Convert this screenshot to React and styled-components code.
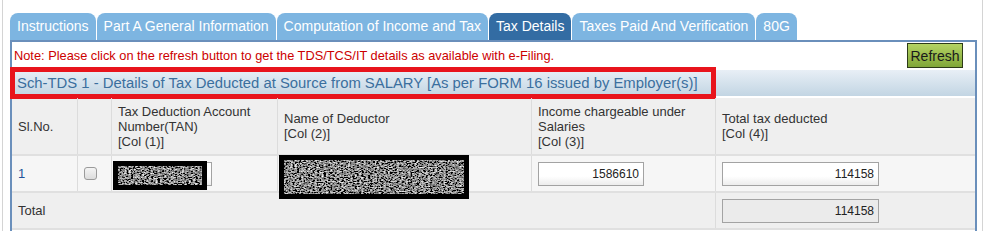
import React from 'react';
import styled, { createGlobalStyle } from 'styled-components';

const GlobalStyle = createGlobalStyle`
  html, body { margin: 0; padding: 0; background: #fff; }
  body { font-family: "Liberation Sans", Arial, sans-serif; }
`;

const Frame = styled.div`
  box-sizing: border-box;
  margin-left: 2px;
  width: 981px;
  height: 231px;
  border-left: 1px solid #d4d4d4;
  border-right: 1px solid #d4d4d4;
  padding: 13px 5px 0 7px;
  overflow: hidden;
`;

const TabBar = styled.div`
  display: flex;
  gap: 1px;
  height: 27px;
`;

const Tab = styled.div`
  padding: 0 7px;
  height: 27px;
  line-height: 27px;
  font-size: 14px;
  color: #fff;
  background: ${p => (p.$active ? '#336ca3' : '#7db5e1')};
  border-radius: 8px 8px 0 0;
  white-space: nowrap;
`;

const Panel = styled.div`
  box-sizing: border-box;
  width: 967px;
  height: 191px;
  border: 2px solid #6a8fbb;
  border-bottom: none;
`;

const NoteRow = styled.div`
  display: flex;
  justify-content: space-between;
  align-items: flex-start;
  height: 28px;
  padding: 1px 12px 0 2px;
  box-sizing: border-box;
`;

const Note = styled.span`
  font-size: 12.8px;
  line-height: 25px;
  color: #cc0000;
`;

const RefreshButton = styled.button`
  box-sizing: border-box;
  width: 56px;
  height: 25px;
  padding: 0;
  border: 1px solid #2c3a18;
  background: linear-gradient(#b4d363, #80a638);
  font-family: "Liberation Sans", Arial, sans-serif;
  font-size: 14px;
  color: #1a1a1a;
`;

const HeadingWrap = styled.div`
  position: relative;
`;

const Heading = styled.div`
  height: 26px;
  line-height: 26px;
  padding-left: 5px;
  background: linear-gradient(#e8eff6, #c2d5e3);
  color: #3b6f9e;
  font-size: 14.85px;
  white-space: nowrap;
`;

const Annotation = styled.div`
  position: absolute;
  left: -2px;
  top: -3px;
  width: 706px;
  height: 32px;
  box-sizing: border-box;
  border: 5px solid #e8141c;
  pointer-events: none;
`;

const Table = styled.div`
  margin-top: 2px;
`;

const Row = styled.div`
  display: grid;
  grid-template-columns: 66px 34px 166px 254px 184px 259px;
  height: ${p => p.$h}px;
  background: ${p => p.$bg};
  border-bottom: 2px solid #e0e0e0;
`;

const Cell = styled.div`
  position: relative;
  display: flex;
  align-items: center;
  padding-left: ${p => (p.$pl ?? 6)}px;
  border-right: ${p => (p.$last ? 'none' : '1px solid #dcdcdc')};
  grid-column: ${p => p.$span || 'auto'};
  font-size: 13px;
  line-height: 15px;
  color: ${p => p.$color || '#333'};
`;

const Check = styled.input`
  appearance: none;
  margin: 0;
  width: 13px;
  height: 13px;
  box-sizing: border-box;
  border: 1px solid #9a9a9a;
  border-radius: 3px;
  background: linear-gradient(#f4f4f4, #dcdcdc);
`;

const Field = styled.input`
  box-sizing: border-box;
  width: ${p => p.$w}px;
  height: 24px;
  border: 1px solid #a3a3a3;
  background: ${p => (p.$disabled ? '#ebebeb' : 'linear-gradient(#fff 60%, #ededed)')};
  text-align: right;
  padding: 0 4px;
  font-family: "Liberation Sans", Arial, sans-serif;
  font-size: 12px;
  color: #222;
`;

const Redaction = styled.div`
  position: absolute;
  z-index: 2;
  left: ${p => p.$l}px;
  top: ${p => p.$t}px;
  width: ${p => p.$w}px;
  height: ${p => p.$h}px;
  box-sizing: border-box;
  background: #000;
  padding: 5px;
  svg { display: block; width: 100%; height: 100%; }
`;

function Noise({ id }) {
  return (
    <svg>
      <filter id={id}>
        <feTurbulence type="fractalNoise" baseFrequency="0.45 0.8" numOctaves="3" seed="7" />
        <feColorMatrix type="saturate" values="0" />
        <feComponentTransfer>
          <feFuncR type="linear" slope="2.6" intercept="-1.05" />
          <feFuncG type="linear" slope="2.6" intercept="-1.05" />
          <feFuncB type="linear" slope="2.6" intercept="-1.05" />
          <feFuncA type="linear" slope="0" intercept="1" />
        </feComponentTransfer>
      </filter>
      <rect width="100%" height="100%" filter={`url(#${id})`} />
    </svg>
  );
}

const tabs = [
  'Instructions',
  'Part A General Information',
  'Computation of Income and Tax',
  'Tax Details',
  'Taxes Paid And Verification',
  '80G',
];

export default function App() {
  return (
    <>
      <GlobalStyle />
      <Frame>
        <TabBar>
          {tabs.map(t => (
            <Tab key={t} $active={t === 'Tax Details'}>{t}</Tab>
          ))}
        </TabBar>
        <Panel>
          <NoteRow>
            <Note>Note: Please click on the refresh button to get the TDS/TCS/IT details as available with e-Filing.</Note>
            <RefreshButton>Refresh</RefreshButton>
          </NoteRow>
          <HeadingWrap>
            <Heading>Sch-TDS 1 - Details of Tax Deducted at Source from SALARY [As per FORM 16 issued by Employer(s)]</Heading>
            <Annotation />
          </HeadingWrap>
          <Table>
            <Row $h={56} $bg="#efefef">
              <Cell>Sl.No.</Cell>
              <Cell />
              <Cell>Tax Deduction Account<br />Number(TAN)<br />[Col (1)]</Cell>
              <Cell>Name of Deductor<br />[Col (2)]</Cell>
              <Cell>Income chargeable under<br />Salaries<br />[Col (3)]</Cell>
              <Cell $last>Total tax deducted<br />[Col (4)]</Cell>
            </Row>
            <Row $h={35} $bg="#f6f6f6">
              <Cell $color="#22529a">1</Cell>
              <Cell><Check type="checkbox" /></Cell>
              <Cell $pl={1}>
                <Field $w={99} defaultValue="" />
                <Redaction $l={1} $t={5} $w={94} $h={29}><Noise id="n1" /></Redaction>
              </Cell>
              <Cell>
                <Redaction $l={1} $t={-1} $w={190} $h={44}><Noise id="n2" /></Redaction>
              </Cell>
              <Cell><Field $w={106} defaultValue="1586610" /></Cell>
              <Cell $last><Field $w={157} defaultValue="114158" /></Cell>
            </Row>
            <Row $h={35} $bg="#efefef">
              <Cell $span="1 / 6">Total</Cell>
              <Cell $last><Field $w={157} $disabled defaultValue="114158" readOnly /></Cell>
            </Row>
          </Table>
        </Panel>
      </Frame>
    </>
  );
}
